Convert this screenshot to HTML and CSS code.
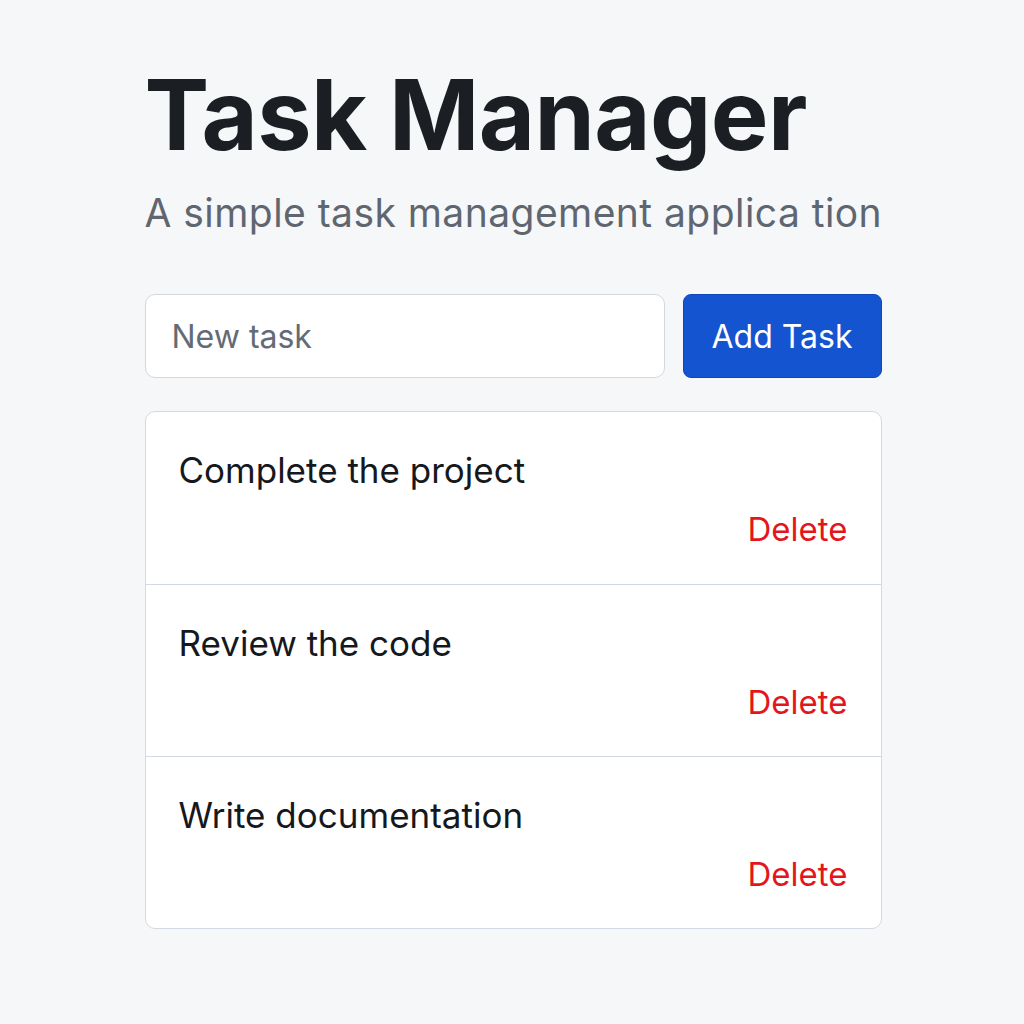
FILE: index.html
```html
<!DOCTYPE html>
<html lang="en">
<head>
    <meta charset="UTF-8">
    <meta name="viewport" content="width=device-width, initial-scale=1.0">
    <title>Task Manager</title>
    <link rel="stylesheet" href="styles.css">
</head>
<body>
    <div class="container">
        <h1>Task Manager</h1>
        <p class="subtitle">A simple task management applica tion</p>

        <div class="add-row">
            <input type="text" class="task-input" placeholder="New task">
            <button class="add-button">Add Task</button>
        </div>

        <ul class="task-list">
            <li class="task-item">
                <span class="task-title">Complete the project</span>
                <button class="delete-button">Delete</button>
            </li>
            <li class="task-item">
                <span class="task-title">Review the code</span>
                <button class="delete-button">Delete</button>
            </li>
            <li class="task-item">
                <span class="task-title">Write documentation</span>
                <button class="delete-button">Delete</button>
            </li>
        </ul>
    </div>
</body>
</html>
```

FILE: styles.css
```css
body {
    font-family: Inter, 'Noto Sans', sans-serif;
    margin: 0;
    background: #f6f7f9;
    min-height: 100vh;
}

.container {
    width: 737px;
    margin: 0 auto;
    padding-top: 62px;
    position: relative;
    left: 1px;
}

h1 {
    margin: 0;
    font-size: 97px;
    font-weight: 700;
    line-height: 1.1;
    color: #1b1f24;
    letter-spacing: -0.6px;
}

.subtitle {
    margin: 21px 0 0 0;
    font-size: 39px;
    color: #5f6670;
    line-height: 1.2;
    white-space: nowrap;
    letter-spacing: 0.45px;
}

.add-row {
    display: flex;
    gap: 18px;
    margin-top: 58px;
}

.task-input {
    flex: 1;
    min-width: 0;
    height: 84px;
    box-sizing: border-box;
    padding: 0 26px;
    border: 1.5px solid #d3d8df;
    border-radius: 10px;
    font-family: inherit;
    font-size: 32px;
    background: #fff;
}

.task-input::placeholder {
    color: #646b75;
}

.add-button {
    flex-shrink: 0;
    width: 199px;
    height: 84px;
    padding: 0;
    border: 1px solid #0f47b8;
    border-radius: 8px;
    background: #1554d1;
    color: #fff;
    font-family: inherit;
    font-size: 32px;
}

.task-list {
    list-style: none;
    margin: 33px 0 0 0;
    padding: 0;
    background: #fff;
    border: 1.5px solid #d3d9e1;
    border-radius: 10px;
}

.task-item {
    height: 172px;
    box-sizing: border-box;
    padding: 37px 33px 0 33px;
    display: flex;
    flex-direction: column;
}

.task-item + .task-item {
    border-top: 1.5px solid #d3d9e1;
}

.task-title {
    font-size: 35px;
    color: #15181c;
    line-height: 1.2;
}

.delete-button {
    align-self: flex-end;
    margin-top: 19px;
    padding: 0;
    border: none;
    background: none;
    color: #e3161b;
    font-family: inherit;
    font-size: 33px;
    line-height: 1.2;
}
```
